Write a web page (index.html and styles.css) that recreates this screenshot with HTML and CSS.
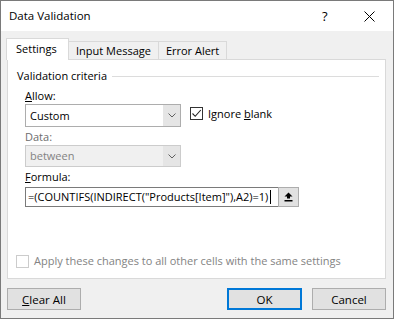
FILE: index.html
```html
<!DOCTYPE html>
<html>
<head>
<meta charset="utf-8">
<link rel="stylesheet" href="styles.css">
</head>
<body>
<div class="window">
  <div class="titlebar">
    <span class="title">Data Validation</span>
    <span class="help">?</span>
    <svg class="close" width="11" height="11" viewBox="0 0 11 11"><path d="M0.5 0.5 L10.5 10.5 M10.5 0.5 L0.5 10.5" stroke="#000" stroke-width="1" fill="none"/></svg>
  </div>
  <div class="body">
    <div class="tabs">
      <div class="tab active">Settings</div>
      <div class="tab">Input Message</div>
      <div class="tab">Error Alert</div>
    </div>
    <div class="panel">
      <div class="legend"><span>Validation criteria</span><span class="rule"></span></div>
      <div class="criteria">
        <div class="field-label"><u>A</u>llow:</div>
        <div class="row">
          <div class="combo"><span class="value">Custom</span><span class="drop"><svg width="8" height="5" viewBox="0 0 8 5"><path d="M0.5 0.5 L4 4 L7.5 0.5" stroke="#606060" fill="none"/></svg></span></div>
          <div class="check"><span class="box"><svg width="11" height="11" viewBox="0 0 11 11"><path d="M1.5 5.5 L4.2 8.3 L9.8 2" stroke="#222" stroke-width="1.1" fill="none"/></svg></span><span>Ignore <u>b</u>lank</span></div>
        </div>
        <div class="field-label disabled data-label">Data:</div>
        <div class="combo disabled"><span class="value">between</span><span class="drop"><svg width="8" height="5" viewBox="0 0 8 5"><path d="M0.5 0.5 L4 4 L7.5 0.5" stroke="#606060" fill="none"/></svg></span></div>
        <div class="field-label formula-label"><u>F</u>ormula:</div>
        <div class="formula">
          <div class="input">=(COUNTIFS(INDIRECT("Products[Item]"),A2)=1)<span class="caret"></span></div>
          <div class="refbtn"><svg width="9" height="10" viewBox="0 0 9 10"><path d="M4.5 0.5 L8.5 4.5 L6 4.5 L6 6.5 L3 6.5 L3 4.5 L0.5 4.5 Z" fill="#000"/><rect x="0.5" y="8" width="8" height="1.5" fill="#000"/></svg></div>
        </div>
      </div>
      <div class="apply"><span class="box empty"></span><span>Apply these changes to all other cells with the same settings</span></div>
    </div>
    <div class="buttons">
      <div class="btn"><u>C</u>lear All</div>
      <div class="spacer"></div>
      <div class="btn default">OK</div>
      <div class="btn">Cancel</div>
    </div>
  </div>
</div>
</body>
</html>
```

FILE: styles.css
```css
* { box-sizing: border-box; }
html, body { margin: 0; padding: 0; background: #fff; }
body {
  font-family: "Open Sans", "Noto Sans", sans-serif;
  font-size: 11px;
  color: #000;
}
.window {
  width: 394px;
  height: 319px;
  border: 1px solid #7a7a7a;
  display: flex;
  flex-direction: column;
  background: #f0f0f0;
}
.titlebar {
  height: 30px;
  background: #fff;
  display: flex;
  align-items: center;
  padding-left: 8px;
}
.title { font-size: 11.5px; flex: 1; line-height: 16px; }
.help { font-size: 13px; width: 42px; line-height: 16px; }
.close { margin-right: 18px; }

.body { flex: 1; display: flex; flex-direction: column; }
.tabs {
  display: flex;
  align-items: flex-end;
  margin: 7px 0 -1px 5px;
}
.tab {
  height: 19px;
  border: 1px solid #d9d9d9;
  border-left: none;
  border-bottom: none;
  background: #f0f0f0;
  line-height: 17px;
  padding: 0 7px;
}
.tab.active {
  height: 22px;
  width: 63px;
  background: #fff;
  border-left: 1px solid #d9d9d9;
  position: relative;
  z-index: 1;
  line-height: 20px;
  padding: 0 0 0 9px;
}
.panel {
  margin-left: 6px;
  width: 379px;
  height: 220px;
  background: #fff;
  border: 1px solid #d9d9d9;
  display: flex;
  flex-direction: column;
}
.legend {
  display: flex;
  align-items: center;
  margin: 8px 6px 0 9px;
  line-height: 16px;
}
.rule { flex: 1; height: 1px; background: #dcdcdc; margin-left: 5px; }
.criteria { padding-left: 17px; display: flex; flex-direction: column; }
.field-label { line-height: 16px; margin-top: 4px; }
.field-label.disabled { color: #6d6d6d; }
.data-label { margin-top: 2px; }
.formula-label { margin-top: 2px; }
.row { display: flex; align-items: flex-start; }
.combo {
  width: 156px;
  height: 23px;
  border: 1px solid #adadad;
  background: #fff;
  display: flex;
  align-items: stretch;
}
.combo .value { flex: 1; padding-left: 4px; line-height: 21px; }
.combo .drop {
  width: 17px;
  background: #e5e5e5;
  display: flex;
  align-items: center;
  justify-content: center;
}
.combo.disabled {
  height: 22px;
  background: #f0f0f0;
  border-color: #cccccc;
  color: #838383;
}
.combo.disabled .value { line-height: 20px; }
.combo.disabled .drop { background: #e5e5e5; }
.check {
  display: flex;
  align-items: center;
  margin: 3px 0 0 9px;
  line-height: 13px;
  gap: 5px;
}
.box {
  width: 13px;
  height: 13px;
  border: 1px solid #333;
  background: #fff;
  display: flex;
  align-items: center;
  justify-content: center;
}
.formula {
  display: flex;
  margin-top: 2px;
  height: 20px;
}
.input {
  width: 253px;
  border: 1px solid #7a7a7a;
  border-right: none;
  background: #fff;
  line-height: 18px;
  padding-left: 2px;
  display: flex;
  align-items: center;
  white-space: nowrap;
}
.caret { width: 1px; height: 14px; background: #000; margin-left: 2px; }
.refbtn {
  width: 21px;
  background: #e1e1e1;
  border: 1px solid #adadad;
  display: flex;
  align-items: center;
  justify-content: center;
}
.apply {
  margin: auto 0 9px 8px;
  display: flex;
  align-items: center;
  gap: 5px;
  color: #838383;
  line-height: 16px;
}
.box.empty { border-color: #cccccc; }
.buttons {
  display: flex;
  margin: 9px 0 0 6px;
  width: 379px;
}
.spacer { flex: 1; }
.btn {
  width: 74px;
  height: 22px;
  border: 1px solid #adadad;
  background: #e1e1e1;
  display: flex;
  align-items: center;
  justify-content: center;
  font-size: 11.5px;
}
.btn.default { border: 2px solid #0078d7; margin-right: 10px; width: 75px; }
```
